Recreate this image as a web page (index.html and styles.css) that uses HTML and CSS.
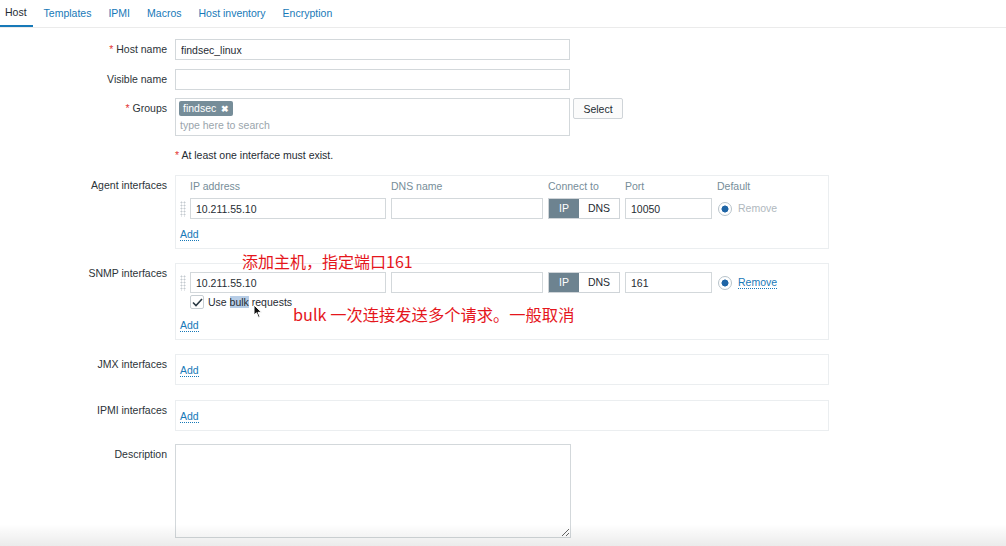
FILE: index.html
```html
<!DOCTYPE html>
<html lang="en">
<head>
    <meta charset="UTF-8">
    <title>Host</title>
    <link rel="stylesheet" href="styles.css">
</head>
<body>
<div class="page">

    <!-- tabs -->
    <ul class="tabs">
        <li class="tab active">Host</li>
        <li class="tab">Templates</li>
        <li class="tab">IPMI</li>
        <li class="tab">Macros</li>
        <li class="tab">Host inventory</li>
        <li class="tab">Encryption</li>
    </ul>

    <div class="form">
        <div class="row mb9">
            <div class="lbl"><span class="req">*</span> Host name</div>
            <input class="text w395" type="text" value="findsec_linux">
        </div>

        <div class="row mb8">
            <div class="lbl">Visible name</div>
            <input class="text w395" type="text" value="">
        </div>

        <div class="row mb13">
            <div class="lbl"><span class="req">*</span> Groups</div>
            <div class="multiselect">
                <span class="tag">findsec <span class="tag-x">&#10006;</span></span>
                <div class="ms-placeholder">type here to search</div>
            </div>
            <button class="btn-select">Select</button>
        </div>

        <div class="row mb14">
            <div class="lbl"></div>
            <div class="note"><span class="req">*</span> At least one interface must exist.</div>
        </div>

        <div class="row mb14">
            <div class="lbl">Agent interfaces</div>
            <div class="ibox agent">
                <div class="igrid head">
                    <span></span>
                    <span>IP address</span>
                    <span>DNS name</span>
                    <span>Connect to</span>
                    <span>Port</span>
                    <span class="def">Default</span>
                </div>
                <div class="igrid">
                    <span class="handle"></span>
                    <input class="text" type="text" value="10.211.55.10">
                    <input class="text" type="text" value="">
                    <div class="toggle"><span class="on">IP</span><span>DNS</span></div>
                    <input class="text" type="text" value="10050">
                    <div class="def-cell"><span class="radio"></span><span class="remove off">Remove</span></div>
                </div>
                <a class="add">Add</a>
            </div>
        </div>

        <div class="row mb14">
            <div class="lbl">SNMP interfaces</div>
            <div class="ibox snmp">
                <div class="igrid">
                    <span class="handle"></span>
                    <input class="text" type="text" value="10.211.55.10">
                    <input class="text" type="text" value="">
                    <div class="toggle"><span class="on">IP</span><span>DNS</span></div>
                    <input class="text" type="text" value="161">
                    <div class="def-cell"><span class="radio"></span><a class="remove">Remove</a></div>
                </div>
                <div class="bulk">
                    <span class="check">
                        <svg width="11" height="9" viewBox="0 0 11 9"><path d="M1 4.5 L4 7.5 L10 1" fill="none" stroke="#2b3a44" stroke-width="1.6"/></svg>
                    </span>
                    <span>Use <span class="sel">bulk</span> requests</span>
                </div>
                <a class="add">Add</a>
            </div>
        </div>

        <div class="row mb15">
            <div class="lbl">JMX interfaces</div>
            <div class="ibox small"><a class="add">Add</a></div>
        </div>

        <div class="row mb13">
            <div class="lbl">IPMI interfaces</div>
            <div class="ibox small"><a class="add">Add</a></div>
        </div>

        <div class="row">
            <div class="lbl">Description</div>
            <textarea class="desc"></textarea>
        </div>
    </div>

    <!-- red notes drawn over the form -->
    <div class="note-red n1">添加主机，指定端口161</div>
    <div class="note-red n2">bulk 一次连接发送多个请求。一般取消</div>

    <svg class="cursor" width="10" height="15" viewBox="0 0 10 15">
        <path d="M1 1 L1 11 L3.5 8.8 L5.5 13.5 L7 12.8 L5 8.3 L8.5 8.3 Z" fill="#111" stroke="#fff" stroke-width="1"/>
    </svg>

    <div class="shade"></div>
</div>
</body>
</html>
```

FILE: styles.css
```css
html, body {
    margin: 0;
    padding: 0;
    background: #fff;
}

body {
    font-family: "Liberation Sans", Arial, "Noto Sans CJK SC", sans-serif;
    font-size: 10.5px;
    color: #1f2c33;
}

.page {
    position: relative;
    width: 1006px;
    height: 546px;
    overflow: hidden;
}

/* tabs */
.tabs {
    list-style: none;
    margin: 0;
    padding: 0;
    height: 27px;
    display: flex;
    gap: 5px;
    border-bottom: 1px solid #ebebeb;
}

.tab {
    padding: 0 6px;
    line-height: 26px;
    color: #1779b8;
    font-size: 10.5px;
}

.tab:first-child {
    padding-left: 5px;
}

.tab.active {
    color: #1f2c33;
    line-height: 25px;
    border-bottom: 2px solid #1779b8;
}

/* form */
.form {
    padding-top: 11px;
}

.row {
    display: flex;
    align-items: flex-start;
}

.mb8 { margin-bottom: 8px; }
.mb9 { margin-bottom: 9px; }
.mb13 { margin-bottom: 13px; }
.mb14 { margin-bottom: 14px; }
.mb15 { margin-bottom: 15px; }

.lbl {
    width: 167px;
    padding-right: 8px;
    text-align: right;
    line-height: 21px;
    flex-shrink: 0;
    color: #2c3338;
}

.req {
    color: #e33734;
}

.text {
    box-sizing: border-box;
    height: 21px;
    border: 1px solid #d3d8db;
    padding: 0 5px;
    margin: 0;
    font-family: inherit;
    font-size: 10.5px;
    color: #1f2c33;
    background: #fff;
    outline: none;
}

.w395 {
    width: 395px;
}

.multiselect {
    box-sizing: border-box;
    width: 395px;
    height: 38px;
    border: 1px solid #d3d8db;
    padding: 2px 3px;
}

.tag {
    display: inline-block;
    background: #768d99;
    color: #fff;
    height: 15px;
    line-height: 15px;
    padding: 0 4px;
    border-radius: 2px;
}

.tag-x {
    font-size: 9px;
    font-weight: bold;
    margin-left: 2px;
}

.ms-placeholder {
    color: #9aa5ac;
    line-height: 18px;
    padding-left: 1px;
}

.btn-select {
    box-sizing: border-box;
    margin-left: 3px;
    width: 50px;
    height: 21px;
    border: 1px solid #cfd4d8;
    border-radius: 2px;
    background: #fbfbfb;
    font-family: inherit;
    font-size: 10.5px;
    color: #1f2c33;
    padding: 0;
}

.note {
    line-height: 12px;
}

/* interface boxes */
.ibox {
    box-sizing: border-box;
    width: 654px;
    border: 1px solid #ebeef0;
    padding: 0 0 0 4px;
}

.agent {
    padding-top: 4px;
    padding-bottom: 7px;
}

.snmp {
    padding-top: 8px;
    padding-bottom: 7px;
}

.small {
    padding-top: 9px;
    padding-bottom: 7px;
}

.igrid {
    display: grid;
    grid-template-columns: 5px 196px 152px 72px 87px auto;
    column-gap: 5px;
    align-items: center;
}

.igrid .text {
    width: 100%;
}

.head {
    color: #768d99;
    line-height: 12px;
    margin-bottom: 6px;
}

.handle {
    width: 6px;
    height: 16px;
    background-image: radial-gradient(circle, #c4cacf 0.9px, transparent 1.1px);
    background-size: 3px 3px;
}

.toggle {
    display: flex;
    height: 21px;
    box-sizing: border-box;
    border: 1px solid #cfd4d8;
}

.toggle span {
    line-height: 19px;
    text-align: center;
    flex: 1 1 auto;
}

.toggle span:first-child {
    width: 30px;
    flex: none;
}

.toggle .on {
    background: #6d8390;
    color: #fff;
}

.def-cell {
    display: flex;
    align-items: center;
    padding-left: 1px;
}

.radio {
    box-sizing: border-box;
    width: 14px;
    height: 14px;
    border-radius: 50%;
    border: 1px solid #b8c3ca;
    background: radial-gradient(circle, #1f65a6 3.2px, #fff 3.8px);
    margin-right: 6px;
}

.remove {
    color: #1779b8;
    border-bottom: 1px dotted #1779b8;
    line-height: 12px;
}

.remove.off {
    color: #b0b8be;
    border-bottom: 1px dotted transparent;
}

.add {
    display: inline-block;
    color: #1779b8;
    line-height: 12px;
    border-bottom: 1px dotted #1779b8;
}

.agent .add {
    margin-top: 9px;
}

.snmp .add {
    margin-top: 10px;
}

.bulk {
    display: flex;
    align-items: center;
    margin-top: 2px;
    margin-left: 10px;
    line-height: 13px;
}

.check {
    box-sizing: border-box;
    width: 14px;
    height: 14px;
    border: 1px solid #c7ced3;
    border-radius: 2px;
    display: flex;
    align-items: center;
    justify-content: center;
    margin-right: 4px;
}

.sel {
    background: #b7cde6;
}

.desc {
    box-sizing: border-box;
    width: 396px;
    height: 94px;
    border: 1px solid #d3d8db;
    margin: 0;
    padding: 4px;
    font-family: inherit;
    font-size: 10.5px;
}

/* red annotations */
.note-red {
    position: absolute;
    color: #e5161c;
    font-family: "Noto Sans CJK SC", "Noto Sans", sans-serif;
    font-size: 16px;
    line-height: 20px;
    white-space: nowrap;
}

.n1 {
    left: 242px;
    top: 251px;
}

.n2 {
    left: 293px;
    top: 304px;
    font-size: 16.3px;
}

.cursor {
    position: absolute;
    left: 253px;
    top: 304px;
}

.shade {
    position: absolute;
    left: 0;
    right: 0;
    bottom: 0;
    height: 22px;
    pointer-events: none;
    background: linear-gradient(to bottom, rgba(0, 0, 0, 0), rgba(0, 0, 0, 0.08));
}
```
